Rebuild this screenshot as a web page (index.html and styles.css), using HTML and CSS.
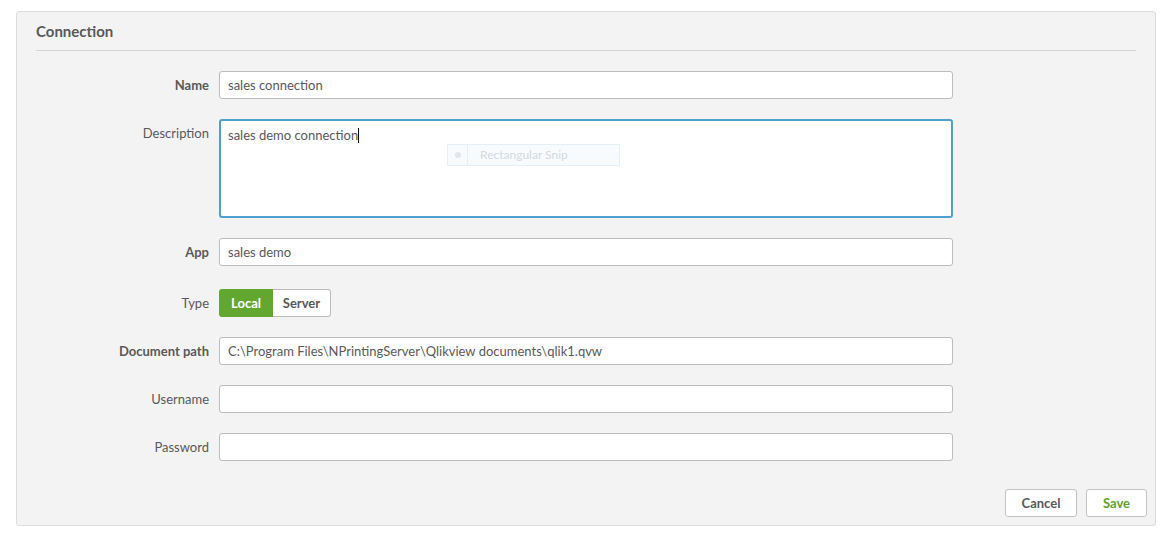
FILE: index.html
```html
<!DOCTYPE html>
<html lang="en">
<head>
<meta charset="utf-8">
<title>Connection</title>
<link rel="stylesheet" href="styles.css">
</head>
<body>
<div class="page">
  <section class="panel">
    <header class="panel-head">
      <h2 class="panel-title">Connection</h2>
    </header>
    <form class="form">
      <label class="lbl bold">Name</label>
      <div class="field">sales connection</div>

      <label class="lbl lbl-top">Description</label>
      <div class="area-wrap">
        <div class="field area">sales demo connection<span class="caret"></span></div>
        <div class="snip">
          <span class="snip-icon"><span class="snip-dot"></span></span>
          <span class="snip-text">Rectangular Snip</span>
        </div>
      </div>

      <label class="lbl bold">App</label>
      <div class="field">sales demo</div>

      <label class="lbl type-lbl">Type</label>
      <div class="toggle">
        <span class="tg tg-on">Local</span>
        <span class="tg tg-off">Server</span>
      </div>

      <label class="lbl bold">Document path</label>
      <div class="field">C:\Program Files\NPrintingServer\Qlikview documents\qlik1.qvw</div>

      <label class="lbl">Username</label>
      <div class="field"></div>

      <label class="lbl">Password</label>
      <div class="field"></div>
    </form>
    <footer class="panel-foot">
      <button class="btn btn-cancel" type="button">Cancel</button>
      <button class="btn btn-save" type="button">Save</button>
    </footer>
  </section>
</div>
</body>
</html>
```

FILE: styles.css
```css
* { box-sizing: border-box; }
html, body { margin: 0; padding: 0; background: #ffffff; }
body {
  font-family: "Lato", "Liberation Sans", sans-serif;
  font-size: 13px;
  color: #595959;
}
.page {
  padding: 11px 17px 0 16px;
}
.panel {
  width: 1140px;
  height: 515px;
  background: #f3f3f3;
  border: 1px solid #dcdcdc;
  border-radius: 3px;
  display: flex;
  flex-direction: column;
}
.panel-head {
  margin: 0 19px 0 19px;
  height: 39px;
  border-bottom: 1px solid #d6d6d6;
  display: flex;
  align-items: center;
  padding-bottom: 1px;
}
.panel-title {
  margin: 0;
  font-size: 15px;
  font-weight: 700;
  color: #595959;
}
.form {
  margin: 20px 0 0 19px;
  display: grid;
  grid-template-columns: 173px 734px;
  column-gap: 10px;
  row-gap: 20px;
  align-items: center;
}
.lbl {
  text-align: right;
  color: #595959;
}
.lbl.bold { font-weight: 700; }
.lbl-top { align-self: start; padding-top: 6px; }
.field {
  height: 28px;
  background: #ffffff;
  border: 1px solid #bcbcbc;
  border-radius: 3px;
  padding: 0 8px;
  display: flex;
  align-items: center;
  color: #595959;
  white-space: nowrap;
}
.area-wrap { position: relative; }
.field.area {
  height: 99px;
  border: 2px solid #4ea1cf;
  align-items: flex-start;
  padding: 6px 7px;
}
.caret {
  display: inline-block;
  width: 1px;
  height: 15px;
  background: #000;
  margin-top: 1px;
}
.snip {
  position: absolute;
  left: 228px;
  top: 25px;
  width: 173px;
  height: 22px;
  display: flex;
  background: #f8fbfd;
  border: 1px solid #e4eff7;
}
.snip-icon {
  width: 20px;
  border-right: 1px solid #e4eff7;
  display: flex;
  align-items: center;
  justify-content: center;
}
.snip-dot {
  width: 6px; height: 6px; border-radius: 50%;
  background: #e2e6ea;
}
.snip-text {
  padding-left: 12px;
  line-height: 20px;
  font-size: 12px;
  color: #d3d8dc;
}
.type-lbl { margin-top: 3px; }
.toggle {
  margin-top: 3px;
  display: flex;
  height: 28px;
}
.tg {
  display: flex;
  align-items: center;
  justify-content: center;
  font-weight: 700;
  font-size: 13px;
}
.tg-on {
  width: 54px;
  background: #62a72f;
  color: #ffffff;
  border-radius: 3px 0 0 3px;
}
.tg-off {
  width: 58px;
  background: #ffffff;
  color: #595959;
  border: 1px solid #bcbcbc;
  border-left: none;
  border-radius: 0 3px 3px 0;
}
.panel-foot {
  margin-top: auto;
  padding: 0 8px 8px 0;
  display: flex;
  justify-content: flex-end;
  gap: 9px;
}
.btn {
  height: 28px;
  background: #ffffff;
  border: 1px solid #c2c2c2;
  border-radius: 3px;
  font-family: "Lato", "Liberation Sans", sans-serif;
  font-size: 13px;
  font-weight: 700;
  padding: 0;
}
.btn-cancel { width: 72px; color: #595959; }
.btn-save { width: 61px; color: #5ea22b; }
```
